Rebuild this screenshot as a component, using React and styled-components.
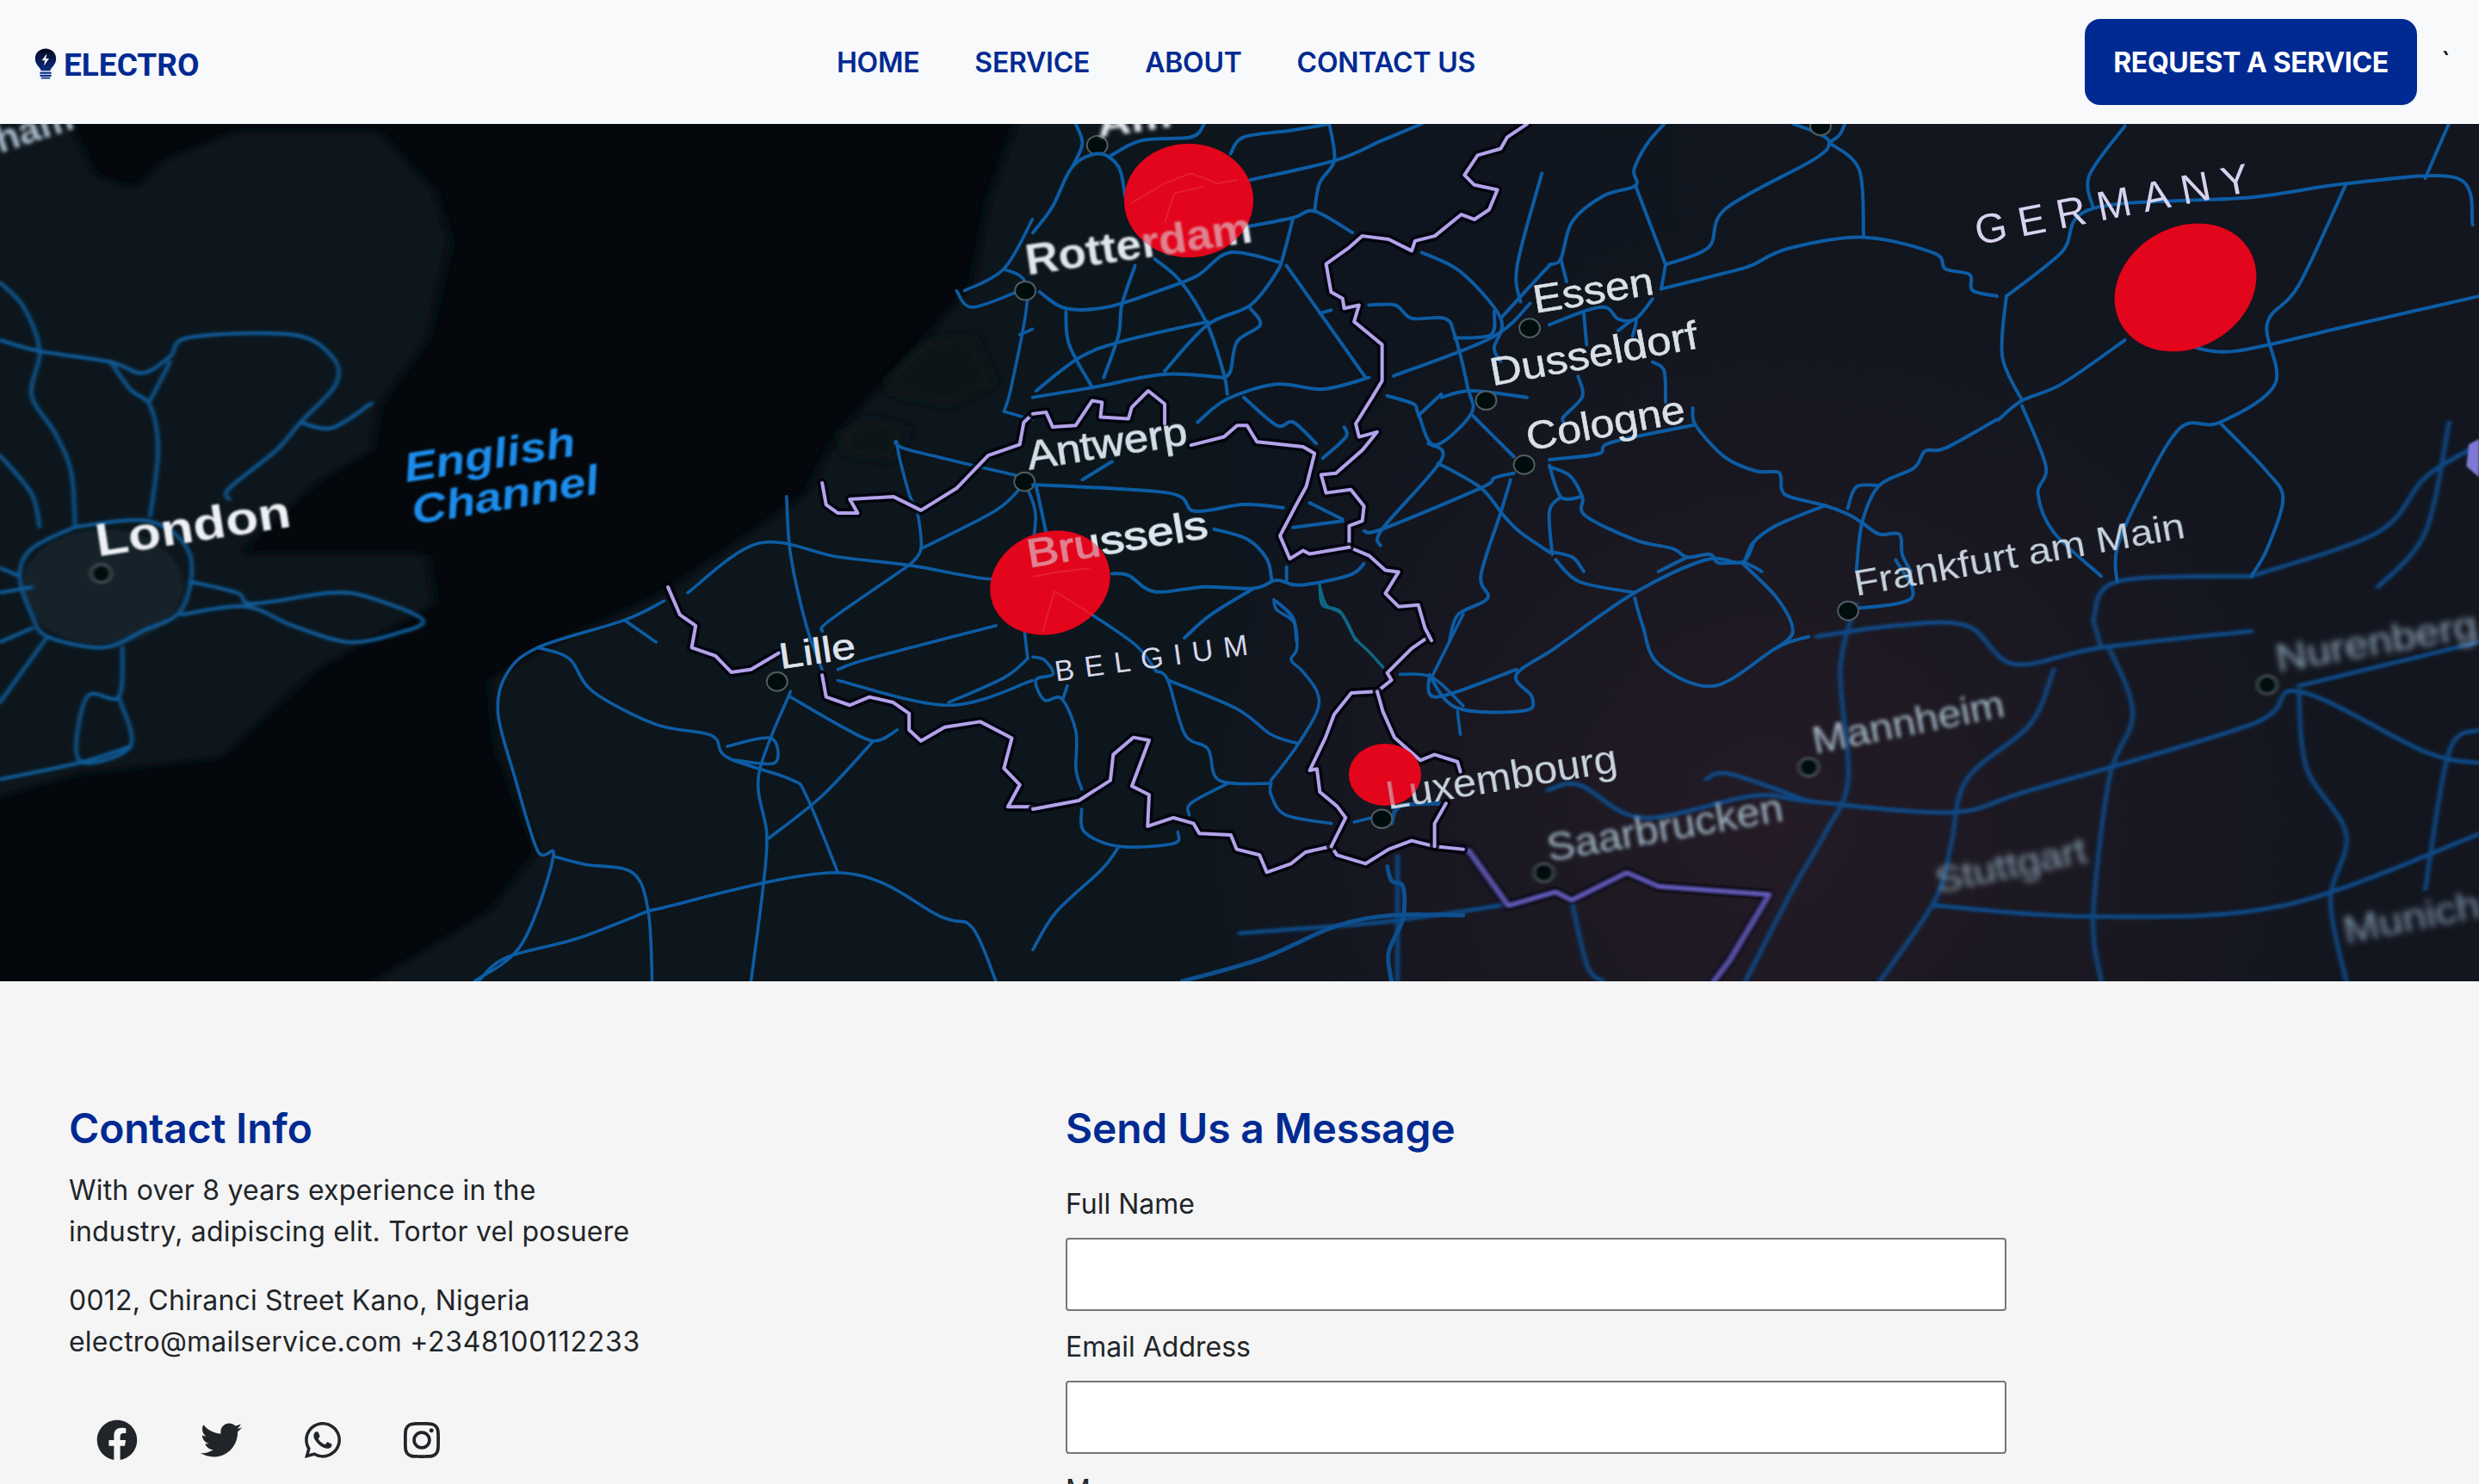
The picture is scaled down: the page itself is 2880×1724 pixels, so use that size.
import styled, { createGlobalStyle } from "styled-components";
import { FaFacebook, FaTwitter, FaWhatsapp, FaInstagram } from "react-icons/fa";

const BLUE = "#002a92";

const GlobalStyle = createGlobalStyle`
  html, body { margin: 0; height: 100%; overflow: hidden; }
  body {
    background: #f5f5f5;
    color: #212529;
    font-family: Inter, "Liberation Sans", sans-serif;
    font-size: 32px;
    line-height: 1.5;
  }
  * { box-sizing: border-box; }
`;

// map paths are traced in the coordinates of several crops of the map
const PANEL_LEFT = "matrix(0.9184 0 0 0.6378 0 140)";
const PANEL_RIGHT = "matrix(0.9184 0 0 0.6378 1440 140)";
const CROP_A = "matrix(0.3827 0 0 0.3827 1200 144)";
const CROP_B = "matrix(0.3333 0 0 0.3333 1200 640)";
const CROP_C = "matrix(0.3333 0 0 0.3333 1800 144)";

const roadsLeft = [
  "870,860 960,770 1060,795 1150,810 1250,835 1300,830",
  "840,875 790,910 680,960 640,1010 630,1080 650,1190 680,1330 700,1340 660,1500 600,1568",
  "790,910 830,950",
  "680,960 720,980 750,1040 830,1100 900,1120 920,1160 1000,1200 1020,1230 1060,1370",
  "995,685 1000,790 1020,920 1040,1000",
  "1150,810 1050,910 1040,930",
  "1000,1040 960,1190 970,1300 965,1400 950,1568",
  "1105,1130 1040,1230 970,1310",
  "700,1340 740,1355 800,1370 820,1440 825,1568",
  "820,1440 1060,1370 1190,1450 1230,1470 1260,1568",
  "820,1440 730,1490 640,1525 605,1568",
  "1060,1000 1100,980 1260,920",
  "920,1140 975,1125 980,1170 930,1165",
  "1000,1050 1060,1100 1105,1130 1135,1110",
  "1296,660 1310,720 1300,830",
  "1296,650 1150,600 1135,590 1150,680 1160,710 1165,780 1150,810",
  "1165,780 1260,710 1296,660",
  "1296,930 1300,980",
  "1200,1060 1270,1015 1300,980",
  "1060,1020 1200,1065 1306,1020",
  "1220,310 1270,270 1306,180",
  "1270,270 1300,310 1280,480 1270,530",
  "1270,530 1306,545",
  "1290,390 1306,380",
  "1210,310 1230,340 1290,310",
];

const roadsUk = [
  "0,295 30,340 50,420 40,500 70,570 90,640 95,740",
  "0,400 50,420 140,440 180,460 215,430 240,395 370,390 420,430 425,480 380,550 350,600 290,670 290,690",
  "140,440 165,490 190,520 200,600 190,720",
  "215,440 190,510",
  "380,550 420,560 470,515",
  "0,610 40,680 50,740",
  "95,740 40,780 25,830 40,900 60,940 130,960 180,930 230,890 240,790 190,730 95,740",
  "240,840 300,860 320,880 420,860 470,870 535,910 500,935 440,950 370,920 310,885 230,900",
  "40,850 0,860",
  "25,830 0,815",
  "60,940 20,1020 0,1060",
  "155,960 150,1050 110,1050 100,1165 165,1140 150,1050",
  "165,1140 100,1170 0,1200",
  "40,925 0,950",
];

const roadsA = [
  "0,330 60,250 120,130 200,90 260,130 280,220",
  "120,130 150,60 130,0",
  "230,100 330,50 480,40 520,0",
  "600,90 640,40 780,20 900,0",
  "660,170 920,110 1060,50 1180,0",
  "900,0 915,110 870,180 855,265",
  "660,310 790,285 855,265 970,330",
  "790,285 760,400 740,450 660,550 530,610 400,750",
  "750,420 600,390 500,460 400,500 230,555 100,560 20,510",
  "370,410 450,480 530,610 580,760 590,820",
  "660,560 690,610 620,660 600,750 580,770",
  "530,600 270,660 140,710 10,810",
  "310,430 270,550 260,640 215,770",
  "100,570 110,670 180,800",
  "0,830 180,800 400,760 580,770",
  "500,905 590,835 740,790 880,805 1020,770",
  "640,830 740,915 790,905 860,970",
  "770,430 1010,770",
  "870,575 905,565",
  "880,1015 950,950 945,920",
  "150,1080 240,1025",
  "0,1095 410,1120 490,1175 640,1155 760,1165",
  "10,1100 40,1240",
  "240,1365 290,1370 370,1420 520,1405 670,1410 740,1385 810,1400 960,1370 1005,1335",
  "550,1230 650,1260 710,1320 725,1385",
  "670,1410 540,1490 460,1560",
  "840,1150 940,1200",
  "790,1225 940,1205",
  "1005,1235 1060,1230 1360,1105 1400,1075 1460,1060",
  "1055,1280 1060,1230 1240,1020 1200,970",
  "1095,765 1390,650 1510,545",
  "1020,550 1100,550 1150,590 1250,590 1280,640 1320,800 1330,880 1220,975 1170,880 1155,850 1075,825",
  "1180,390 1300,450 1420,590 1400,680 1420,720",
  "1240,830 1330,810 1500,830",
  "1170,885 1240,820",
  "1330,880 1460,1010",
  "1230,1030 1360,1105 1430,1190 1480,1240 1568,1300",
  "1450,1080 1420,1180 1360,1370 1380,1440 1290,1490 1265,1568",
  "1545,150 1470,430 1480,540",
  "1568,430 1530,470 1420,590",
  "1280,650 1390,640 1400,570",
  "770,1345 770,1385",
  "740,1450 790,1500 800,1568",
];

const roadsTeal = [
  "870,1400 890,1460 940,1490 980,1568",
];

const roadsB = [
  "0,370 40,380 70,430 10,450 40,520 100,515 150,630 150,760 170,830",
  "105,515 120,470",
  "210,225 360,330 430,420",
  "430,420 470,450 530,640 610,690 650,800 830,810",
  "470,450 710,550 830,640 920,670",
  "840,170 850,205 910,250 920,340 900,380 940,420 990,490 990,560 920,680 830,800",
  "830,810 830,850 880,920 1040,950",
  "680,810 550,880 545,920",
  "170,900 180,980 300,1030 490,1020 505,980",
  "300,1030 240,1110 80,1260 0,1390",
  "1280,430 1390,440 1500,540",
  "1390,440 1440,340 1500,220",
  "1480,560 1490,640",
  "1120,945 1180,930",
];

const roadsBTeal = [
  "1000,120 1010,190 1070,210 1120,300 1170,350 1220,405",
];

const roadsBFar = [
  "1250,950 1280,890 1420,880",
  "1235,1100 1250,1150 1290,1170 1290,1280 1240,1400 1250,1500",
  "520,1500 800,1420 1050,1310 1250,1270 1500,1270",
];

const roadsC = [
  "0,490 40,470 80,340 190,250 300,215 295,160 340,70 400,0",
  "40,470 60,550",
  "300,215 405,490",
  "405,490 555,430 615,295 920,125 975,65 930,30 850,0",
  "975,65 1080,160 1095,390",
  "390,575 590,525 700,495 830,435 1095,395 1340,450 1380,505 1465,525 1475,580 1560,600",
  "405,490 390,575",
  "1030,0 1010,40 975,65",
  "0,700 130,650 200,640 240,680 300,680 360,610",
  "120,660 130,770",
  "240,720 300,680 290,740",
  "360,830 400,860 405,970",
  "100,880 115,950 50,1020 50,1040",
  "500,990 510,1050 610,1160 720,1210 800,1215 810,1275 840,1300 960,1330 1040,1360 1090,1390 1150,1430 1220,1430 1230,1500 1260,1560",
  "0,1170 170,1150 215,1110 500,1050",
  "0,1195 70,1225 115,1300 125,1365 300,1450 430,1480 480,1510 560,1500 590,1530 680,1530 740,1560",
  "0,1190 40,1300 110,1300",
  "40,1300 0,1350 10,1500",
  "960,1330 790,1400 710,1460 680,1530",
  "1560,1030 1380,1130 1310,1140 1270,1200 1150,1260 1090,1390 1070,1560",
  "1040,1340 1070,1265 1150,1260",
  "480,1510 380,1560",
  "0,1490 80,1510 120,1560",
];

const roadsRight = [
  "970,320 1040,240 1080,160 1280,140 1400,115 1540,105 1560,190",
  "1120,10 1075,100 1080,160",
  "1400,115 1340,300 1300,370 1310,480 1240,550 1190,560 1140,680 1110,780 1110,840",
  "1120,400 1040,480 990,510 960,545",
  "970,320 965,430 990,510",
  "990,520 1020,630 1010,680 1030,750 1090,830",
  "1200,410 1260,420 1400,375 1568,320",
  "1240,550 1300,640 1320,690 1300,780 1280,830",
  "830,800 850,870 770,890",
  "650,770 635,805 590,800 500,860 400,960 350,1010 370,1050 360,1075 275,1070 240,1010",
  "635,805 680,870 700,930 680,960",
  "500,870 510,920 530,990 600,1030 680,960 720,940",
  "400,800 430,840 500,860",
  "350,1000 250,1050 240,1010",
  "1530,5 1500,105",
];

const roadsRightFar = [
  "730,940 830,920 920,920 980,990 1090,960 1280,930",
  "780,880 760,1000 770,1200 740,1300 700,1400 640,1568",
  "390,1220 430,1210 510,1270 650,1230 720,1240 900,1260 1000,1220 1280,1100 1340,1040 1500,1150 1568,1170",
  "1100,960 1130,1080 1100,1200 1080,1450 1090,1568",
  "1340,1040 1350,1180 1400,1300 1380,1420 1400,1568",
  "1030,1000 1000,1100 920,1200 900,1320 880,1420 810,1568",
  "1080,910 1110,840 1280,830",
  "1080,910 1090,960",
  "1280,830 1440,750 1500,650 1568,590",
  "1340,1030 1568,950",
  "880,1430 1080,1450 1320,1430 1568,1300",
  "0,1480 180,1460 330,1430",
  "200,1340 200,1568",
  "420,1420 440,1540 460,1568",
  "1500,1400 1530,1150 1568,1110",
  "1530,550 1500,750 1440,850",
  "720,1240 620,1190 590,1200",
];

const bordersLeft = [
  "1040,660 1045,700 1060,715 1085,715 1075,690 1130,685 1165,710 1210,670 1250,610 1290,590 1295,550 1306,535",
  "845,850 860,900 880,920 875,960 905,975 925,1005 950,1000 985,970",
  "1040,1010 1045,1050 1075,1065 1100,1050 1130,1060 1150,1080 1150,1110 1165,1130 1195,1105 1240,1095 1280,1125 1270,1180 1290,1210 1275,1250 1306,1250",
];

const bordersA = [
  "1500,0 1440,40 1420,75 1350,95 1310,155 1340,185 1410,200 1385,260 1340,290 1300,275 1220,340 1160,355 1150,385 1080,350 1000,340 960,375 890,425 905,510 940,530 945,560 990,550 975,600 1060,670 1060,780 1030,830 980,910 990,950 1045,935 1000,990 920,1060 875,1065 890,1120 965,1110 1005,1160 1000,1205 960,1220 960,1285 1020,1310 1070,1355 1110,1360 1070,1425 1110,1465 1170,1460 1190,1530 1210,1568",
  "960,1285 840,1305 820,1295 780,1320 750,1250 800,1155 830,1100 855,1000 820,980 680,965 650,915 620,915 580,950 480,975",
  "0,880 40,875 60,920 130,915 180,840 210,845 205,890 290,895 300,860 350,810 400,850 400,910",
];

const bordersB = [
  "0,900 160,870 270,800 280,710 350,650 405,660 345,820 405,850 400,960 490,930 560,950 580,985 690,990 710,1040 790,1060 815,1120 900,1090 950,1050 1040,1030 1060,1060 1160,1090 1240,1040 1320,1010 1400,1030 1500,1040",
  "1385,295 1320,340 1235,425 1250,450 1200,490 1110,495 1050,570 1020,650 965,765 990,760 1000,840 1060,890 1090,930 1040,1030",
  "1200,490 1220,560 1260,650 1350,730 1400,710 1480,735 1490,770",
  "1440,880 1400,950 1400,1030",
];

const bordersRightFar = [
  "270,1322 290,1330 340,1430 400,1405 420,1420 490,1370 530,1395 670,1410 620,1530 600,1568",
];

const dotsLeft = [
  [983, 1022], [1296, 658], [1297, 310], [1388, 45],
];
const dotsRight = [
  [367, 378], [312, 510], [360, 627], [770, 893], [180, 1272], [735, 10],
];
const dotsRightFar = [
  [720, 1178], [385, 1370], [1300, 1028],
];

// baseline start and end as measured on the shrunk reference
const labels = [
  { text: "ham", from: [0, 97], to: [48, 81], size: 44, weight: 700, blur: "m2", fill: "#a9bccb" },
  { text: "Am", from: [695, 87], to: [742, 80], size: 44, weight: 700, blur: "m2" },
  { text: "London", from: [62, 352], to: [185, 333], size: 54, weight: 700, blur: "m1" },
  { text: "English", from: [257, 305], to: [365, 288], size: 48, weight: 700, italic: true, blur: "m1", fill: "#1b8cec" },
  { text: "Channel", from: [262, 332], to: [380, 312], size: 48, weight: 700, italic: true, blur: "m1", fill: "#1b8cec" },
  { text: "Rotterdam", from: [650, 174], to: [793, 153], size: 50, weight: 700, blur: "m1", fill: "#dfe8ee" },
  { text: "Antwerp", from: [651, 297], to: [752, 281], size: 46, fill: "#d3dee6", stroke: 0.8, blur: "m05" },
  { text: "Brussels", from: [651, 359], to: [765, 340], size: 46, fill: "#dce6ee", stroke: 1.2, blur: "m05" },
  { text: "Lille", from: [494, 423], to: [542, 416], size: 42, fill: "#dfe3ee", stroke: 0.6 },
  { text: "BELGIUM", from: [668, 431], to: [790, 414], size: 34, fill: "#d6d7ea", spaced: true },
  { text: "GERMANY", from: [1251, 155], to: [1424, 121], size: 48, fill: "#d8d2f0", spaced: true },
  { text: "Essen", from: [971, 198], to: [1047, 186], size: 46, fill: "#d9e0e8", stroke: 0.5 },
  { text: "Dusseldorf", from: [944, 244], to: [1075, 220], size: 46, fill: "#d9e0e8", stroke: 0.5 },
  { text: "Cologne", from: [967, 285], to: [1067, 267], size: 46, fill: "#d9e0e8", stroke: 0.5 },
  { text: "Frankfurt am Main", from: [1174, 377], to: [1383, 340], size: 42, blur: "m05", fill: "#c7d3de" },
  { text: "Luxembourg", from: [878, 512], to: [1024, 488], size: 46, blur: "m05", fill: "#c9d4de" },
  { text: "Saarbrucken", from: [980, 545], to: [1129, 519], size: 46, blur: "m2", fill: "#9fb4c4" },
  { text: "Mannheim", from: [1148, 477], to: [1269, 453], size: 44, blur: "m2", fill: "#a3b8c6" },
  { text: "Nurenberg", from: [1441, 425], to: [1568, 403], size: 44, blur: "m3", fill: "#8ea4b8" },
  { text: "Stuttgart", from: [1226, 565], to: [1321, 545], size: 42, blur: "m3", fill: "#8aa0b2" },
  { text: "Munich", from: [1484, 597], to: [1570, 580], size: 44, blur: "m3", fill: "#7f97ad" },
];

const SCALE = 2880 / 1568;

const parsePoints = (s) => s.split(" ").map((p) => p.split(",").map(Number));

const smoothPath = (s) => {
  const pts = parsePoints(s);
  let d = `M${pts[0][0]} ${pts[0][1]}`;
  for (let i = 0; i < pts.length - 1; i++) {
    const p0 = pts[i - 1] || pts[i];
    const p1 = pts[i];
    const p2 = pts[i + 1];
    const p3 = pts[i + 2] || p2;
    d += ` C${p1[0] + (p2[0] - p0[0]) / 6} ${p1[1] + (p2[1] - p0[1]) / 6} ${p2[0] - (p3[0] - p1[0]) / 6} ${p2[1] - (p3[1] - p1[1]) / 6} ${p2[0]} ${p2[1]}`;
  }
  return d;
};

const Roads = ({ list, width = 4, color = "#0a5ca4" }) =>
  list.map((points) => (
    <path
      key={points}
      d={smoothPath(points)}
      fill="none"
      stroke={color}
      strokeWidth={width}
      strokeLinejoin="round"
      strokeLinecap="round"
      vectorEffect="non-scaling-stroke"
    />
  ));

const Borders = ({ list, color = "#b3a3ea", width = 4 }) =>
  list.map((points) => (
    <g key={points} fill="none" strokeLinejoin="round" strokeLinecap="round">
      <polyline points={points} stroke="#04060a" strokeWidth={width + 7} opacity="0.85" vectorEffect="non-scaling-stroke" />
      <polyline points={points} stroke={color} strokeWidth={width} vectorEffect="non-scaling-stroke" />
    </g>
  ));

const CityDots = ({ list }) =>
  list.map((at) => (
    <ellipse
      key={at.join()}
      cx={at[0]}
      cy={at[1]}
      rx="13"
      ry="17"
      fill="#06090c"
      stroke="#4f5d64"
      strokeWidth="2"
      vectorEffect="non-scaling-stroke"
    />
  ));

const MapLabel = ({ label }) => {
  const [x1, y1] = label.from;
  const [x2, y2] = label.to;
  const angle = (Math.atan2(y2 - y1, x2 - x1) * 180) / Math.PI;
  const length = Math.hypot(x2 - x1, y2 - y1) * SCALE;
  return (
    <text
      transform={`translate(${x1 * SCALE} ${(y1 - 78.4) * SCALE}) rotate(${angle})`}
      textLength={length}
      lengthAdjust={label.spaced ? "spacing" : "spacingAndGlyphs"}
      fontFamily='"Liberation Sans", sans-serif'
      fontSize={label.size}
      fontWeight={label.weight || 400}
      fontStyle={label.italic ? "italic" : "normal"}
      fill={label.fill || "#eef1f5"}
      stroke={label.stroke ? label.fill : "none"}
      strokeWidth={label.stroke || 0}
      filter={label.blur ? `url(#${label.blur})` : undefined}
    >
      {label.text}
    </text>
  );
};

const RedDots = ({ opacity = 1 }) => (
  <g fill="#e2061c" opacity={opacity}>
    <ellipse cx="1381" cy="233" rx="75" ry="66" />
    <ellipse cx="1220" cy="677" rx="71" ry="59" transform="rotate(-20 1220 677)" />
    <ellipse cx="2539" cy="334" rx="86" ry="70" transform="rotate(-30 2539 334)" />
    <ellipse cx="1609" cy="900" rx="42" ry="36" />
  </g>
);

const HeroMap = () => (
  <MapSvg viewBox="0 0 2880 996" role="img" aria-label="Map of Belgium and surrounding regions">
    <defs>
      <filter id="m05" x="-20%" y="-50%" width="140%" height="200%"><feGaussianBlur stdDeviation="0.7" /></filter>
      <filter id="m1" x="-20%" y="-50%" width="140%" height="200%"><feGaussianBlur stdDeviation="1.3" /></filter>
      <filter id="m2" x="-20%" y="-50%" width="140%" height="200%"><feGaussianBlur stdDeviation="2.2" /></filter>
      <filter id="m3" x="-20%" y="-50%" width="140%" height="200%"><feGaussianBlur stdDeviation="3.6" /></filter>
      <filter id="soft" x="-10%" y="-10%" width="120%" height="120%"><feGaussianBlur stdDeviation="9" /></filter>
      <linearGradient id="land" gradientUnits="userSpaceOnUse" x1="600" y1="0" x2="2880" y2="0">
        <stop offset="0" stopColor="#0b151d" />
        <stop offset="0.45" stopColor="#0f151e" />
        <stop offset="1" stopColor="#13161f" />
      </linearGradient>
      <linearGradient id="landPanel" gradientUnits="userSpaceOnUse" x1="653" y1="0" x2="3136" y2="0">
        <stop offset="0" stopColor="#0b151d" />
        <stop offset="0.45" stopColor="#0f151e" />
        <stop offset="1" stopColor="#13161f" />
      </linearGradient>
      <radialGradient id="glow" gradientUnits="userSpaceOnUse" cx="2050" cy="960" r="700">
        <stop offset="0" stopColor="#2c1d28" stopOpacity="0.7" />
        <stop offset="1" stopColor="#2c1d28" stopOpacity="0" />
      </radialGradient>
    </defs>

    <g transform="translate(0 -144)">
      <rect x="0" y="0" width="2880" height="1300" fill="#04080c" />

      <g transform={PANEL_LEFT}>
        <path
          filter="url(#soft)"
          fill="#0a151b"
          d="M-20 -20 L90 10 L120 100 L170 125 L210 70 L300 20 L480 20 L550 130 L570 220 L540 400 L480 520 L470 600 L400 660 L300 790 L540 790 L550 880 L400 1000 L280 1160 L100 1190 L-20 1240 Z"
        />
        <path
          filter="url(#soft)"
          fill="url(#landPanel)"
          d="M1300 -60 L1250 150 L1230 300 L1150 430 L1060 570 L1020 680 L840 860 L690 960 L620 1020 L630 1150 L680 1330 L620 1440 L390 1640 L1640 1640 L1640 -60 Z"
        />
        <path fill="#0a1218" filter="url(#soft)" d="M1120 470 L1170 400 L1230 390 L1260 480 L1200 520 L1130 500 Z M1060 570 L1100 540 L1150 560 L1130 620 L1070 610 Z" />
      </g>
      <rect x="1440" y="0" width="1440" height="1300" fill="url(#land)" />
      <rect x="1200" y="144" width="1680" height="1000" fill="url(#glow)" />

      <g transform={PANEL_LEFT}>
        <ellipse cx="130" cy="850" rx="102" ry="105" fill="#15232b" filter="url(#m3)" />
        <g filter="url(#m2)"><Roads list={roadsUk} width={4.4} color="#0d5a96" /></g>
        <g filter="url(#m05)">
          <Roads list={roadsLeft} width={3.6} />
          <Borders list={bordersLeft} />
          <CityDots list={dotsLeft} />
        </g>
        <g filter="url(#m2)"><CityDots list={[[128, 825]]} /></g>
      </g>

      <g transform={PANEL_RIGHT}>
        <g filter="url(#m2)">
          <Roads list={roadsRightFar} width={5} color="#0f4a86" />
          <Borders list={bordersRightFar} color="#6a62c6" />
          <CityDots list={dotsRightFar} />
        </g>
        <g filter="url(#m05)"><Roads list={roadsRight} /></g>
        <path d="M1555 590 L1568 580 L1568 650 L1552 630 Z" fill="#7f78d6" filter="url(#m1)" />
      </g>

      <g transform={CROP_C}><g filter="url(#m05)"><Roads list={roadsC} /></g></g>
      <g transform={CROP_B}>
        <g filter="url(#m2)"><Roads list={roadsBFar} width={5} color="#0c4f8f" /></g>
        <g filter="url(#m05)">
          <Roads list={roadsB} width={3.6} />
          <Roads list={roadsBTeal} width={3.4} color="#0d6884" />
          <Borders list={bordersB} />
        </g>
      </g>
      <g transform={CROP_A}>
        <g filter="url(#m05)">
          <Roads list={roadsA} />
          <Roads list={roadsTeal} width={3.4} color="#0d6884" />
          <Borders list={bordersA} />
        </g>
      </g>
      <g transform={PANEL_RIGHT}><g filter="url(#m05)"><CityDots list={dotsRight} /></g></g>

      <RedDots />
      <g transform={CROP_A} fill="none" stroke="#f08a90" strokeOpacity="0.35" strokeWidth="2">
        <path d="M300 240 L400 180 L480 150 L560 180 L620 170 M400 300 L430 210 L520 190" vectorEffect="non-scaling-stroke" />
      </g>
      <g transform={CROP_B} fill="none" stroke="#f08a90" strokeOpacity="0.35" strokeWidth="2">
        <path d="M75 140 L210 225 M75 140 L35 280 M0 90 L75 75 L200 60" vectorEffect="non-scaling-stroke" />
      </g>
      <g transform="translate(0 144)">
        {labels.map((l) => <MapLabel key={l.text} label={l} />)}
      </g>
      <RedDots opacity={0.45} />
    </g>
  </MapSvg>
);

const LogoBulb = () => (
  <svg width="26" height="36" viewBox="0 0 26 36" aria-hidden="true">
    <defs>
      <linearGradient id="bulb" x1="0" y1="0" x2="0" y2="1">
        <stop offset="0" stopColor="#04081a" />
        <stop offset="1" stopColor="#0a2c84" />
      </linearGradient>
    </defs>
    <path
      fill="url(#bulb)"
      d="M13 0.5C6 0.5 .8 5.6 .8 12.2c0 4.3 2.2 7.2 4.4 9.7 1.3 1.5 2.2 2.9 2.5 4.4h10.6c.3-1.5 1.2-2.9 2.5-4.4 2.2-2.5 4.4-5.4 4.4-9.7C25.2 5.6 20 .5 13 .5z"
    />
    <path fill="#f8f9fa" d="M14.4 6.2 8.6 14.3h3.6l-1.2 6.2 6-8.4h-3.7z" />
    <rect x="6.4" y="27.6" width="13.2" height="2.2" fill="#0a2c84" />
    <rect x="6.4" y="30.8" width="13.2" height="2.2" fill="#0a2c84" />
    <rect x="7.6" y="33.8" width="10.8" height="1.8" rx="0.9" fill="#0a2c84" />
  </svg>
);

const App = () => (
  <>
    <GlobalStyle />
    <Header>
      <Brand>
        <LogoBulb />
        <BrandName>ELECTRO</BrandName>
      </Brand>
      <Nav>
        <NavLink href="#home">HOME</NavLink>
        <NavLink href="#service">SERVICE</NavLink>
        <NavLink href="#about">ABOUT</NavLink>
        <NavLink href="#contact">CONTACT US</NavLink>
      </Nav>
      <Actions>
        <RequestButton>REQUEST A SERVICE</RequestButton>
        <Stray>`</Stray>
      </Actions>
    </Header>

    <Hero>
      <HeroMap />
    </Hero>

    <ContactSection>
      <InfoColumn>
        <Heading>Contact Info</Heading>
        <Paragraph>
          With over 8 years experience in the
          <br />
          industry, adipiscing elit. Tortor vel posuere
        </Paragraph>
        <Paragraph>
          0012, Chiranci Street Kano, Nigeria
          <br />
          electro@mailservice.com <Phone>+2348100112233</Phone>
        </Paragraph>
        <Socials>
          <SocialLink href="#facebook" aria-label="Facebook" $width={48}><FaFacebook /></SocialLink>
          <SocialLink href="#twitter" aria-label="Twitter" $width={48}><FaTwitter /></SocialLink>
          <SocialLink href="#whatsapp" aria-label="WhatsApp" $width={42}><FaWhatsapp /></SocialLink>
          <SocialLink href="#instagram" aria-label="Instagram" $width={42}><FaInstagram /></SocialLink>
        </Socials>
      </InfoColumn>
      <FormColumn>
        <FormHeading>Send Us a Message</FormHeading>
        <Field>
          <FieldLabel htmlFor="name">Full Name</FieldLabel>
          <TextInput id="name" type="text" />
        </Field>
        <Field>
          <FieldLabel htmlFor="email">Email Address</FieldLabel>
          <TextInput id="email" type="email" />
        </Field>
        <Field>
          <FieldLabel htmlFor="message">Message</FieldLabel>
          <TextArea id="message" rows="4" />
        </Field>
      </FormColumn>
    </ContactSection>
  </>
);

const Header = styled.header`
  display: grid;
  grid-template-columns: 932px auto 1fr;
  align-items: center;
  height: 144px;
  padding-left: 40px;
  background: #f8f9fa;
`;

const Brand = styled.div`
  display: flex;
  align-items: center;
  gap: 8px;
  padding-top: 4px;
`;

const BrandName = styled.span`
  padding-top: 3px;
  font-family: Roboto, sans-serif;
  font-size: 37px;
  font-weight: 700;
  line-height: 1;
  color: ${BLUE};
`;

const Nav = styled.nav`
  display: flex;
  gap: 64px;
  padding-top: 2px;
`;

const NavLink = styled.a`
  font-size: 32px;
  font-weight: 600;
  letter-spacing: -0.25px;
  color: ${BLUE};
  text-decoration: none;
`;

const Actions = styled.div`
  display: flex;
  justify-content: flex-end;
  align-items: center;
`;

const RequestButton = styled.button`
  width: 386px;
  height: 100px;
  padding: 0;
  border: none;
  border-radius: 18px;
  background: ${BLUE};
  color: #ffffff;
  font-family: Inter, sans-serif;
  font-size: 32px;
  font-weight: 700;
  letter-spacing: -0.4px;
`;

const Stray = styled.span`
  align-self: flex-start;
  width: 72px;
  margin-top: 34px;
  padding-left: 28px;
  font-size: 34px;
  line-height: 1;
  color: #000000;
`;

const Hero = styled.section`
  height: 996px;
  overflow: hidden;
`;

const MapSvg = styled.svg`
  display: block;
  width: 2880px;
  height: 996px;
`;

const ContactSection = styled.section`
  display: grid;
  grid-template-columns: 1158px 1093px;
  padding: 142px 80px 0;
`;

const InfoColumn = styled.div`
  display: flex;
  flex-direction: column;
`;

const FormColumn = styled.form`
  display: flex;
  flex-direction: column;
`;

const Heading = styled.h2`
  margin: 0 0 19px;
  font-size: 48px;
  font-weight: 600;
  line-height: 1.2;
  letter-spacing: -0.2px;
  color: ${BLUE};
`;

const FormHeading = styled(Heading)`
  margin-bottom: 35px;
`;

const Paragraph = styled.p`
  margin: 0 0 32px;
  font-size: 32px;
  letter-spacing: 0.2px;
  line-height: 48px;
`;

const Phone = styled.span`
  letter-spacing: 0.7px;
`;

const Socials = styled.div`
  display: flex;
  align-items: center;
  gap: 73px;
  margin-top: 34px;
  padding-left: 32px;
`;

const SocialLink = styled.a`
  display: flex;
  color: #212529;

  svg {
    width: ${(p) => p.$width}px;
    height: 48px;
  }
`;

const Field = styled.div`
  display: flex;
  flex-direction: column;
  margin-bottom: 18px;
`;

const FieldLabel = styled.label`
  margin-bottom: 15px;
  font-size: 32px;
  line-height: 48px;
`;

const TextInput = styled.input`
  height: 85px;
  width: 100%;
  background: #ffffff;
  border: 2px solid #767676;
  border-radius: 4px;
`;

const TextArea = styled.textarea`
  width: 100%;
  background: #ffffff;
  border: 2px solid #767676;
  border-radius: 4px;
`;

export default App;
